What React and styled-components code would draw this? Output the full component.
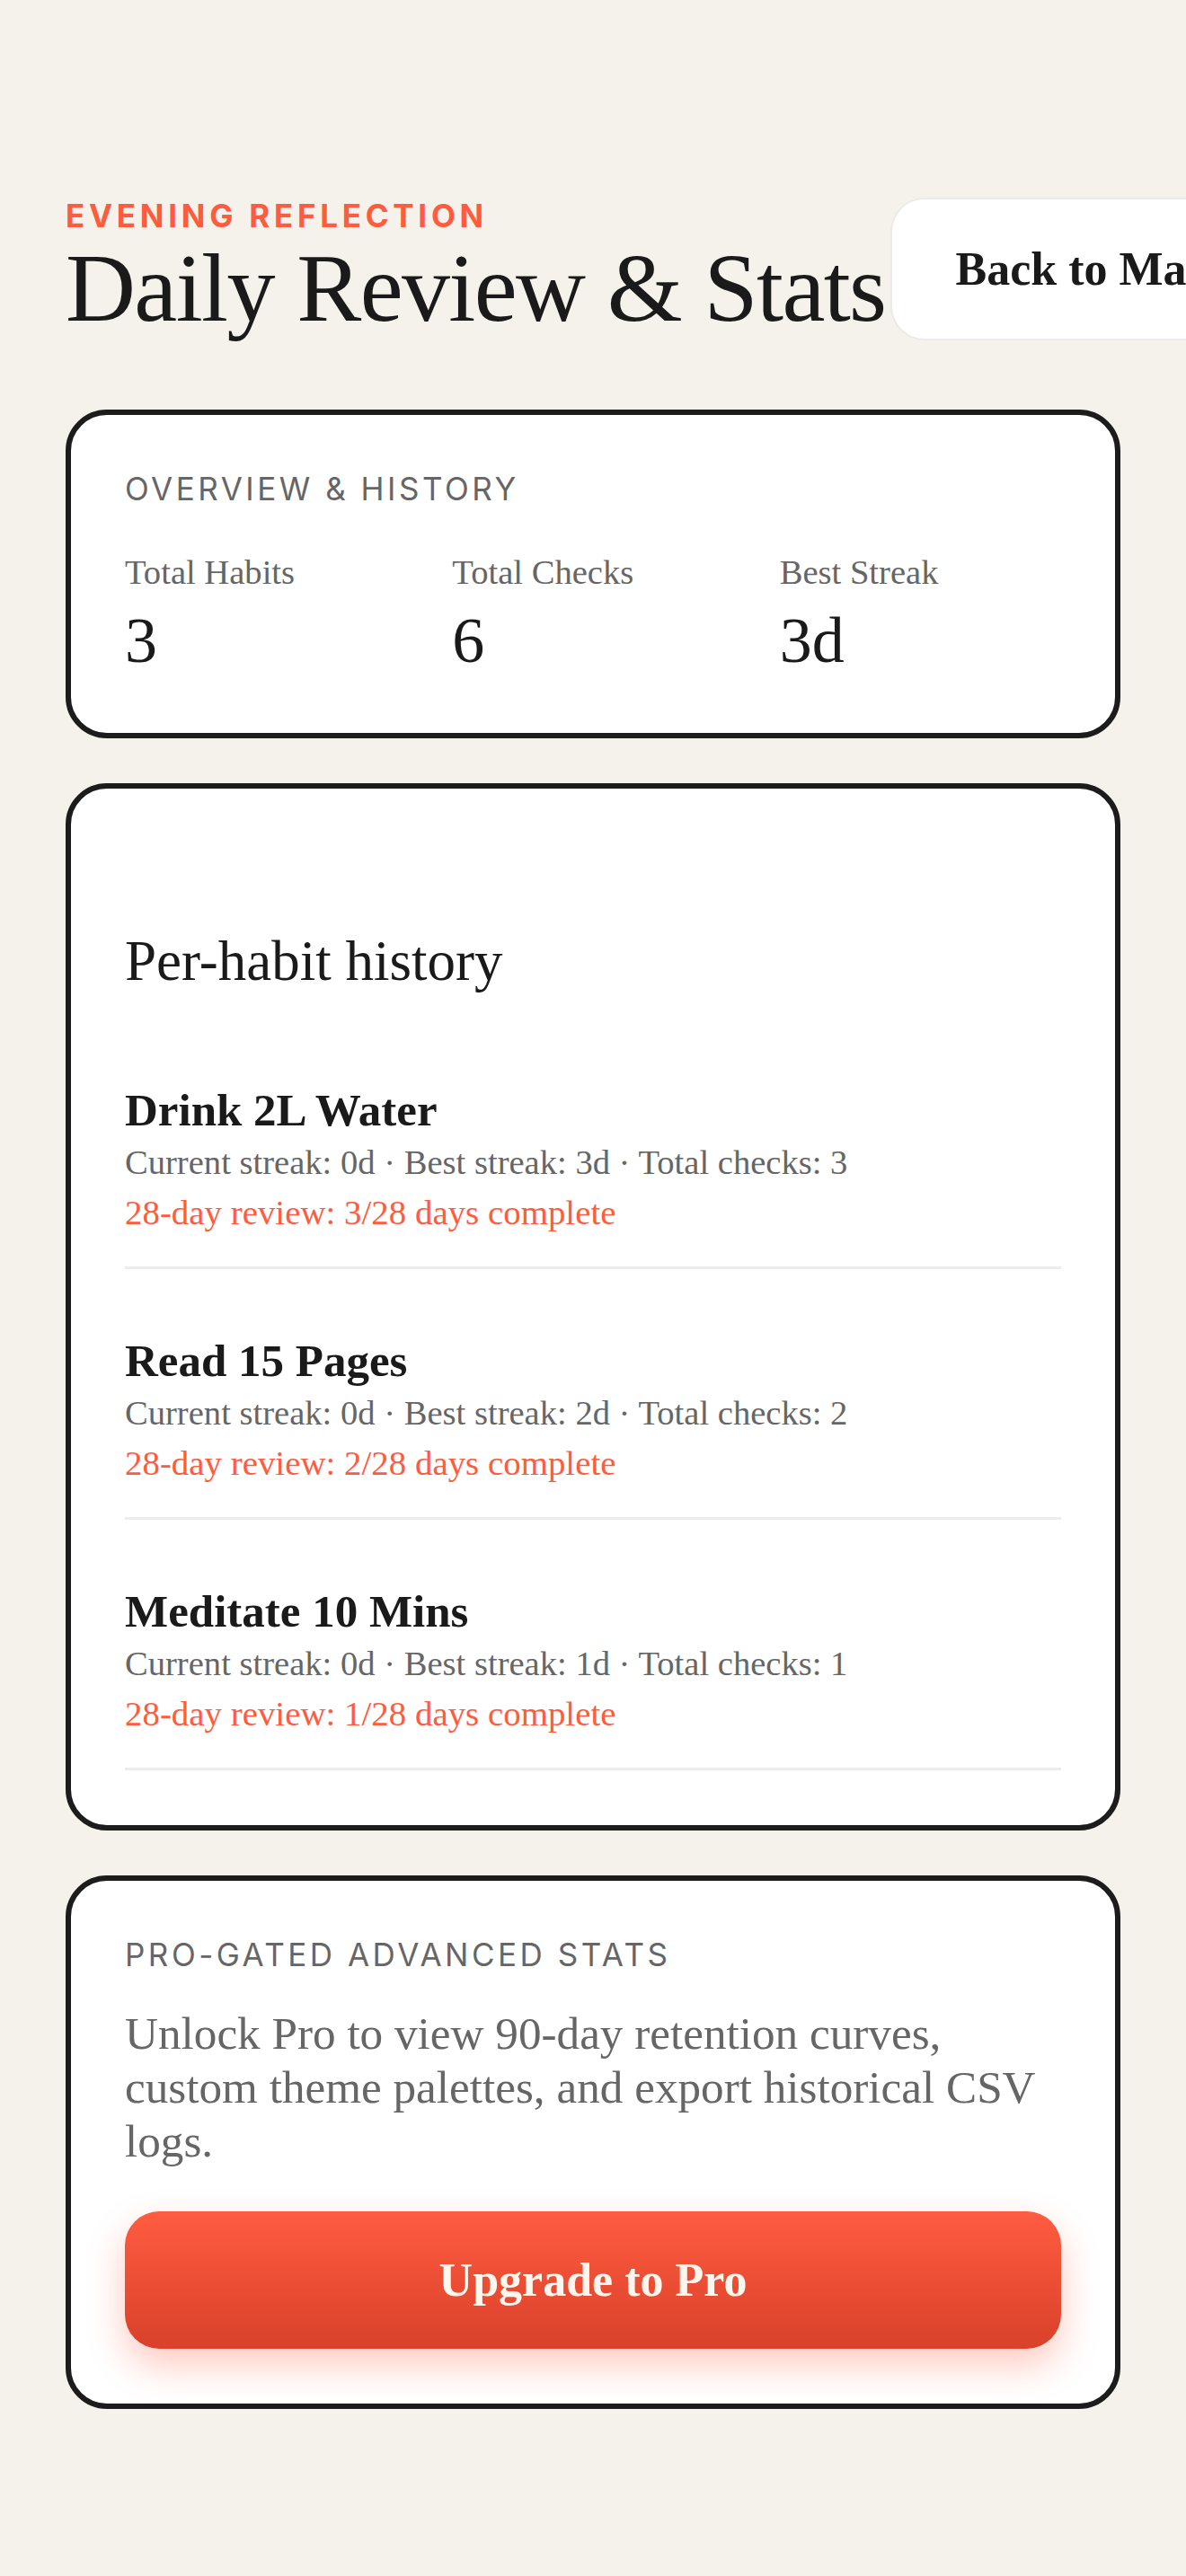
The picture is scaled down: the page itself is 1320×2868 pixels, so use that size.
import React from "react";
import styled, { createGlobalStyle } from "styled-components";

const GlobalStyle = createGlobalStyle`
  html, body {
    margin: 0;
    padding: 0;
    background: #F5F2EB;
  }
  body {
    overflow-x: hidden;
    font-family: "Liberation Serif", "Times New Roman", serif;
    color: #1a1a1a;
  }
  * { box-sizing: border-box; }
`;

const Page = styled.main`
  display: flex;
  flex-direction: column;
  padding: 220px 73px 120px;
`;

const Header = styled.header`
  display: flex;
  align-items: stretch;
  gap: 5px;
  margin-bottom: 77px;
`;

const TitleBlock = styled.div`
  flex-shrink: 0;
  display: flex;
  flex-direction: column;
`;

const Eyebrow = styled.div`
  font-family: Inter, "Liberation Sans", sans-serif;
  font-weight: 700;
  font-size: 35px;
  line-height: 40px;
  letter-spacing: 0.135em;
  text-transform: uppercase;
  color: #FF5B3E;
  margin-bottom: 3px;
`;

const Title = styled.h1`
  margin: 0;
  font-family: "Liberation Serif", "Times New Roman", serif;
  font-weight: 400;
  font-size: 108px;
  line-height: 116px;
  letter-spacing: -0.015em;
  color: #1a1a1a;
  white-space: nowrap;
`;

const BackButton = styled.button`
  flex-shrink: 0;
  white-space: nowrap;
  background: #ffffff;
  border: 2px solid #ECEAE6;
  border-radius: 38px;
  padding: 0 71px;
  font-family: "Liberation Serif", "Times New Roman", serif;
  font-weight: 700;
  font-size: 52px;
  line-height: 1;
  color: #1a1a1a;
  cursor: pointer;
`;

const Cards = styled.div`
  display: flex;
  flex-direction: column;
  gap: 50px;
`;

const Card = styled.section`
  background: #ffffff;
  border: 6px solid #1c1c1c;
  border-radius: 46px;
  padding: 61px 60px;
  display: flex;
  flex-direction: column;
`;

const SectionLabel = styled.div`
  font-family: Inter, "Liberation Sans", sans-serif;
  font-weight: 400;
  font-size: 35px;
  line-height: 42px;
  letter-spacing: 0.1em;
  text-transform: uppercase;
  color: #666666;
  margin-bottom: ${(p) => p.$mb || "51px"};
`;

const StatsGrid = styled.div`
  display: grid;
  grid-template-columns: repeat(3, 1fr);
  column-gap: 51px;
`;

const Stat = styled.div`
  display: flex;
  flex-direction: column;
`;

const StatLabel = styled.div`
  font-size: 38.6px;
  line-height: 43.7px;
  color: #666666;
  margin-bottom: 12px;
`;

const StatValue = styled.div`
  font-size: 72px;
  line-height: 83px;
  color: #1a1a1a;
`;

const HistoryHeading = styled.h2`
  margin: 95px 0 28px;
  font-weight: 400;
  font-size: 63px;
  line-height: 72.5px;
  color: #1a1a1a;
`;

const HabitList = styled.div`
  display: flex;
  flex-direction: column;
`;

const HabitItem = styled.article`
  display: flex;
  flex-direction: column;
  padding: 72px 0 32px;
  border-bottom: 3px solid #ECECEC;
`;

const HabitName = styled.h3`
  margin: 0;
  font-weight: 700;
  font-size: 51px;
  line-height: 60px;
  color: #1a1a1a;
`;

const HabitMeta = styled.div`
  font-size: ${(p) => (p.$accent ? "38.9px" : "38.6px")};
  line-height: 56px;
  color: ${(p) => (p.$accent ? "#FF5B3E" : "#666666")};
`;

const ProText = styled.p`
  margin: 0 0 48px;
  font-size: 51.2px;
  line-height: 60px;
  color: #666666;
`;

const UpgradeButton = styled.button`
  width: 100%;
  height: 153px;
  border: none;
  border-radius: 38px;
  background: linear-gradient(180deg, #FF5C40 0%, #D9412A 100%);
  box-shadow: 0 18px 42px rgba(255, 88, 60, 0.32);
  font-family: "Liberation Serif", "Times New Roman", serif;
  font-weight: 700;
  font-size: 52px;
  line-height: 1;
  color: #FBF6EE;
  cursor: pointer;
`;

const habits = [
  { name: "Drink 2L Water", best: 3, total: 3 },
  { name: "Read 15 Pages", best: 2, total: 2 },
  { name: "Meditate 10 Mins", best: 1, total: 1 },
];

export default function App() {
  return (
    <>
      <GlobalStyle />
      <Page>
        <Header>
          <TitleBlock>
            <Eyebrow>Evening Reflection</Eyebrow>
            <Title>Daily Review &amp; Stats</Title>
          </TitleBlock>
          <BackButton>Back to Main</BackButton>
        </Header>

        <Cards>
          <Card>
            <SectionLabel>Overview &amp; History</SectionLabel>
            <StatsGrid>
              <Stat>
                <StatLabel>Total Habits</StatLabel>
                <StatValue>3</StatValue>
              </Stat>
              <Stat>
                <StatLabel>Total Checks</StatLabel>
                <StatValue>6</StatValue>
              </Stat>
              <Stat>
                <StatLabel>Best Streak</StatLabel>
                <StatValue>3d</StatValue>
              </Stat>
            </StatsGrid>
          </Card>

          <Card>
            <HistoryHeading>Per-habit history</HistoryHeading>
            <HabitList>
              {habits.map((h) => (
                <HabitItem key={h.name}>
                  <HabitName>{h.name}</HabitName>
                  <HabitMeta>
                    Current streak: 0d · Best streak: {h.best}d · Total checks: {h.total}
                  </HabitMeta>
                  <HabitMeta $accent>
                    28-day review: {h.total}/28 days complete
                  </HabitMeta>
                </HabitItem>
              ))}
            </HabitList>
          </Card>

          <Card>
            <SectionLabel $mb="37px">Pro-Gated Advanced Stats</SectionLabel>
            <ProText>
              Unlock Pro to view 90-day retention curves, custom theme palettes, and export historical CSV logs.
            </ProText>
            <UpgradeButton>Upgrade to Pro</UpgradeButton>
          </Card>
        </Cards>
      </Page>
    </>
  );
}
